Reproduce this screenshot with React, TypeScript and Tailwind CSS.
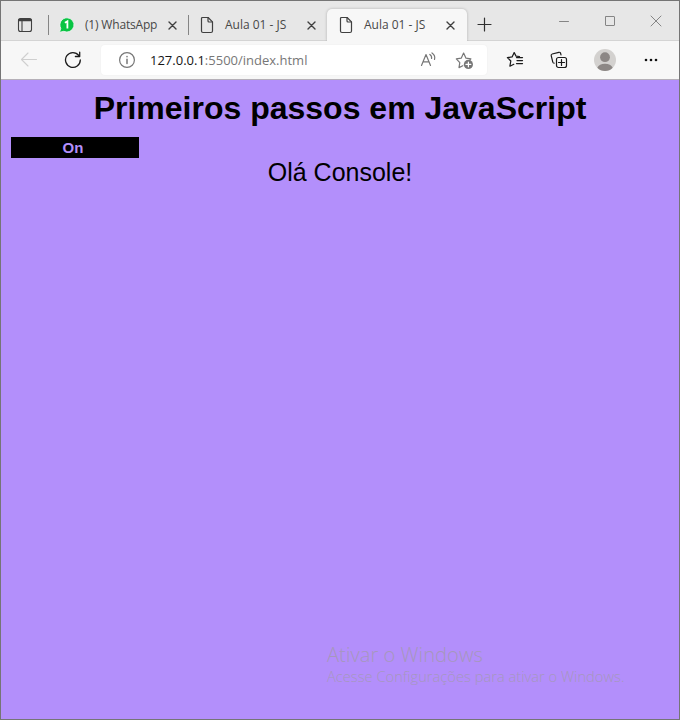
import type { ReactNode } from "react";

type IconProps = { className?: string; children: ReactNode; box: string; sw?: number };

function Icon({ className = "", children, box, sw = 1 }: IconProps) {
  return (
    <svg
      viewBox={box}
      fill="none"
      stroke="currentColor"
      strokeWidth={sw}
      strokeLinecap="round"
      strokeLinejoin="round"
      className={`block shrink-0 ${className}`}
    >
      {children}
    </svg>
  );
}

function PageIcon() {
  return (
    <Icon box="0 0 14 18" className="h-[18px] w-[14px] text-[#404040]" sw={1.2}>
      <path d="M2.5 1.5h5.6l4.4 4.4v9.1q0 1.5-1.5 1.5H3q-1.5 0-1.5-1.5V2.5q0-1 1-1Z" />
      <path d="M8 1.7V5q0 1 1 1h3.4" />
    </Icon>
  );
}

function CloseIcon() {
  return (
    <Icon box="0 0 10 10" className="h-[10px] w-[10px] text-[#404040]" sw={1.4}>
      <path d="M1 2l7 7M8 2L1 9" />
    </Icon>
  );
}

function TabStrip() {
  return (
    <header className="flex h-10 shrink-0 items-start border-b border-[#d4d4d4] bg-[#e7e7e7] font-['Open_Sans','Noto_Sans',sans-serif] text-[12px] leading-4 text-[#484848]">
      <Icon box="0 0 16 16" className="mt-4 ml-4 h-4 w-4 text-[#404040]" sw={1.1}>
        <rect x="1.5" y="1.5" width="13" height="13" rx="2" />
        <path d="M5 4v10" />
        <path d="M2.4 3h11.2" strokeWidth="2.4" />
      </Icon>
      <div className="mt-[14px] ml-[15px] h-5 w-px bg-[#858585]" />

      <div className="flex h-[39px] w-[139px] items-start">
        <svg viewBox="0 0 16 16" className="mt-4 ml-[10px] h-4 w-4 shrink-0">
          <path d="M8 .8a7.1 7.1 0 1 1-3.2 13.5L.6 15.3l1.2-4A7.1 7.1 0 0 1 8 .8Z" fill="#08c443" stroke="#f4f4f4" strokeWidth=".8" />
          <path d="M5.9 5.8l2.5-1.5v7.2" fill="none" stroke="#fff" strokeWidth="1.8" />
        </svg>
        <span className="mt-4 ml-[10px] w-[73px] shrink-0 tracking-[-0.18px] whitespace-nowrap">(1) WhatsApp</span>
        <div className="mt-[19px] ml-[10px]"><CloseIcon /></div>
      </div>
      <div className="mt-[14px] h-5 w-px bg-[#858585]" />

      <div className="flex h-[39px] w-[138px] items-start">
        <div className="mt-[15px] ml-[11px]"><PageIcon /></div>
        <span className="mt-4 ml-[11px] w-[62px] shrink-0 whitespace-nowrap">Aula 01 - JS</span>
        <div className="mt-[19px] ml-[20px]"><CloseIcon /></div>
      </div>

      <div className="mt-2 flex h-8 w-[140px] items-start rounded-t-[5px] bg-[#f7f7f7] shadow-[0_0_3px_rgba(0,0,0,0.25)] [clip-path:inset(-4px_-4px_0_-4px)]">
        <div className="mt-[7px] ml-3"><PageIcon /></div>
        <span className="mt-2 ml-[11px] w-[62px] shrink-0 whitespace-nowrap">Aula 01 - JS</span>
        <div className="mt-[11px] ml-[20px]"><CloseIcon /></div>
      </div>
      <Icon box="0 0 15 15" className="mt-4 ml-[10px] h-[15px] w-[15px] text-[#303030]" sw={1.2}>
        <path d="M7.5 1v13M1 7.5h13" />
      </Icon>

      <div className="mt-[14px] ml-[66px] flex items-center gap-[34px] text-[#858585]">
        <Icon box="0 0 12 12" className="h-3 w-3"><path d="M1.5 6.5h9" /></Icon>
        <Icon box="0 0 12 12" className="h-3 w-3"><rect x="1.5" y="1.5" width="9" height="9" rx=".5" /></Icon>
        <Icon box="0 0 12 12" className="h-3 w-3"><path d="M1 1l10 10M11 1L1 11" /></Icon>
      </div>
    </header>
  );
}

function Toolbar() {
  return (
    <nav className="flex h-[39px] shrink-0 items-center border-b border-[#b5b0b8] bg-[#f7f7f7] text-[#1b1b1b]">
      <Icon box="0 0 18 16" className="ml-[19px] h-4 w-[18px] text-[#cfcfcf]" sw={1.1}>
        <path d="M16.5 7.5h-15M8 1L1.5 7.5 8 14" />
      </Icon>
      <Icon box="0 0 18 18" className="ml-[26px] h-[18px] w-[18px]" sw={1.3}>
        <path d="M16.3 9A7.4 7.4 0 1 1 14.8 4.5" />
        <path d="M15.7 1.2v4.3h-4.3" />
      </Icon>

      <div className="ml-[19px] flex h-[30px] w-[386px] shrink-0 items-center rounded bg-white text-[#777] shadow-[0_0_2px_rgba(0,0,0,0.05)]">
        <Icon box="0 0 18 18" className="ml-[17px] h-[18px] w-[18px]" sw={1.2}>
          <circle cx="9" cy="9" r="7.4" />
          <path d="M9 8.3v4.2M9 5.6v.1" strokeWidth="1.5" />
        </Icon>
        <div className="ml-[14px] w-[158px] shrink-0 whitespace-nowrap font-['Open_Sans','Noto_Sans',sans-serif] text-[13px] leading-5">
          <span className="text-[#161616]">127.0.0.1</span>:5500/index.html
        </div>
        <Icon box="0 0 17 16" className="ml-[112px] h-4 w-[17px]" sw={1.2}>
          <path d="M1.5 13.5L6 2.6l4.5 10.9M3.2 9.8h5.6" />
          <path d="M9.8 2.5q2.2 1.3 1.8 4M12 .9q3.6 2.3 2.5 6.6" />
        </Icon>
        <Icon box="0 0 19 19" className="ml-[18px] h-[19px] w-[19px]" sw={1.2}>
          <path d="M7.8 14.7L4 16.6l.8-4.9L1.3 7.9l4.9-.7L8.6 2.1 11 7.2l4.9.6-1.2 1.3" />
          <circle cx="13.4" cy="13.4" r="4.6" fill="currentColor" stroke="none" />
          <path d="M13.4 11v4.8M11 13.4h4.8" stroke="#fff" />
        </Icon>
      </div>

      <Icon box="0 0 18 18" className="ml-[19px] h-[18px] w-[18px]" sw={1.25}>
        <path d="M13.5 5.5l-3.4-.3L8.2 1.6 6.1 5.9l-4.7.7 3.4 3.4-.9 5.2 3.9-1.9" />
        <path d="M10.5 6.5h6M11 9.5h5.5M10.5 12.5h6" />
      </Icon>
      <Icon box="0 0 18 18" className="ml-[26px] h-[18px] w-[18px]" sw={1.2}>
        <path d="M4.1 12.2q-1 0-1.3-1L1.2 4.7Q.9 3.4 2.2 3L8.8 1.3q1.4-.3 1.8 1l.4 1.6" />
        <rect x="6.5" y="6.5" width="10" height="10" rx="2" />
        <path d="M11.5 8.5v6M8.5 11.5h6" />
      </Icon>
      <svg viewBox="0 0 22 22" className="ml-[26px] h-[22px] w-[22px] shrink-0">
        <circle cx="11" cy="11" r="11" fill="#d3d1cf" />
        <circle cx="11" cy="8.2" r="4.9" fill="#8c8785" />
        <path d="M3.3 18.8a8.2 6 0 0 1 15.4 0Q15.5 22 11 22t-7.7-3.2Z" fill="#8c8785" />
      </svg>
      <svg viewBox="0 0 14 4" className="ml-[28px] h-1 w-[14px] shrink-0" fill="#111">
        <circle cx="2" cy="2" r="1.3" />
        <circle cx="7" cy="2" r="1.3" />
        <circle cx="12" cy="2" r="1.3" />
      </svg>
    </nav>
  );
}

export default function App() {
  return (
    <div className="flex h-[720px] w-[680px] flex-col overflow-hidden border border-[#757575] bg-[#b38ffb]">
      <TabStrip />
      <Toolbar />
      <main className="flex flex-1 flex-col font-['Liberation_Sans',Arial,sans-serif] text-black">
        <h1 className="mt-[9px] text-center text-[32px] leading-[38px] font-bold whitespace-nowrap">Primeiros passos em JavaScript</h1>
        <button className="mt-[10px] ml-[10px] h-[21px] w-32 bg-black pr-1 text-center text-[15px] leading-[21px] font-bold text-[#b38ffb]">On</button>
        <p className="text-center text-[25px] leading-7">Olá Console!</p>
        <aside className="mt-auto mb-[33px] ml-[326px] font-['Open_Sans','Noto_Sans',sans-serif] font-light whitespace-nowrap text-[#a697bd]">
          <div className="text-[20.2px] leading-6">Ativar o Windows</div>
          <div className="text-[14.7px] leading-5">Acesse Configurações para ativar o Windows.</div>
        </aside>
      </main>
    </div>
  );
}
